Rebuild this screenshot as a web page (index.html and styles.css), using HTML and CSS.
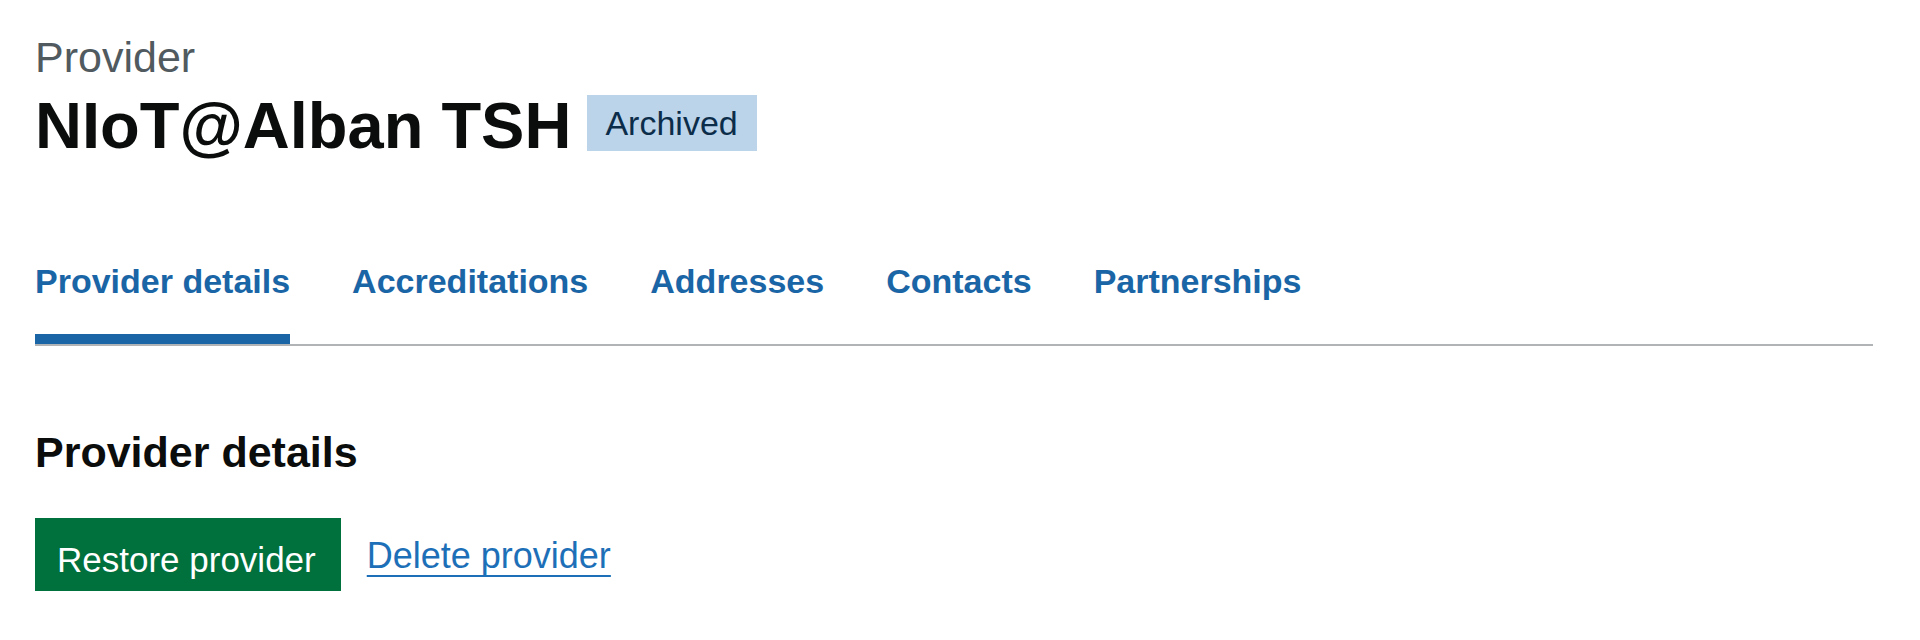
FILE: index.html
```html
<!DOCTYPE html>
<html lang="en">
<head>
<meta charset="utf-8">
<title>Provider – NIoT@Alban TSH</title>
<link rel="stylesheet" href="styles.css">
</head>
<body>
<main class="page">
  <span class="caption">Provider</span>
  <div class="title-row">
    <h1 class="title">NIoT@Alban TSH</h1>
    <strong class="tag">Archived</strong>
  </div>
  <nav class="subnav" aria-label="Provider sections">
    <ul class="subnav-list">
      <li><a class="subnav-link is-active" href="#">Provider details</a></li>
      <li><a class="subnav-link" href="#">Accreditations</a></li>
      <li><a class="subnav-link" href="#">Addresses</a></li>
      <li><a class="subnav-link" href="#">Contacts</a></li>
      <li><a class="subnav-link" href="#">Partnerships</a></li>
    </ul>
  </nav>
  <h2 class="section-heading">Provider details</h2>
  <div class="actions">
    <button class="button" type="button">Restore provider</button>
    <a class="link" href="#">Delete provider</a>
  </div>
</main>
</body>
</html>
```

FILE: styles.css
```css
* { box-sizing: border-box; }

html, body {
  margin: 0;
  padding: 0;
  background: #ffffff;
}

body {
  font-family: "Liberation Sans", Arial, sans-serif;
  color: #0b0c0c;
}

.page {
  padding: 32px 47px 0 35px;
}

.caption {
  display: block;
  font-size: 43px;
  line-height: 50px;
  color: #505a5f;
}

.title-row {
  display: flex;
  align-items: flex-start;
  margin-top: 6px;
}

.title {
  margin: 0;
  font-size: 65px;
  line-height: 75px;
  font-weight: 700;
  color: #0b0c0c;
}

.tag {
  margin: 7px 0 0 16px;
  padding: 0 19px 0 18px;
  height: 56px;
  font-size: 34px;
  line-height: 56px;
  font-weight: 400;
  color: #0c2d4a;
  background: #bbd4ea;
}

.subnav {
  margin-top: 98px;
  border-bottom: 2px solid #b1b4b6;
}

.subnav-list {
  display: flex;
  gap: 62px;
  margin: 0;
  padding: 0;
  list-style: none;
}

.subnav-link {
  display: block;
  padding-bottom: 33px;
  border-bottom: 10px solid transparent;
  font-size: 34px;
  line-height: 40px;
  font-weight: 700;
  color: #1a65a6;
  text-decoration: none;
}

.subnav-link.is-active {
  border-bottom-color: #1a65a6;
}

.section-heading {
  margin: 81px 0 0;
  font-size: 43px;
  line-height: 50px;
  font-weight: 700;
  color: #0b0c0c;
}

.actions {
  display: flex;
  align-items: flex-start;
  margin-top: 41px;
}

.button {
  margin: 0;
  padding: 22px 25px 11px 22px;
  border: 0;
  border-radius: 0;
  background: #00703c;
  box-shadow: 0 4px 0 #002d18;
  color: #ffffff;
  font-family: inherit;
  font-size: 35px;
  line-height: 40px;
  cursor: pointer;
}

.link {
  margin: 18px 0 0 26px;
  font-size: 36px;
  line-height: 40px;
  color: #1d70b8;
  text-decoration: underline;
  text-decoration-thickness: 2px;
  text-underline-offset: 7px;
}
```
